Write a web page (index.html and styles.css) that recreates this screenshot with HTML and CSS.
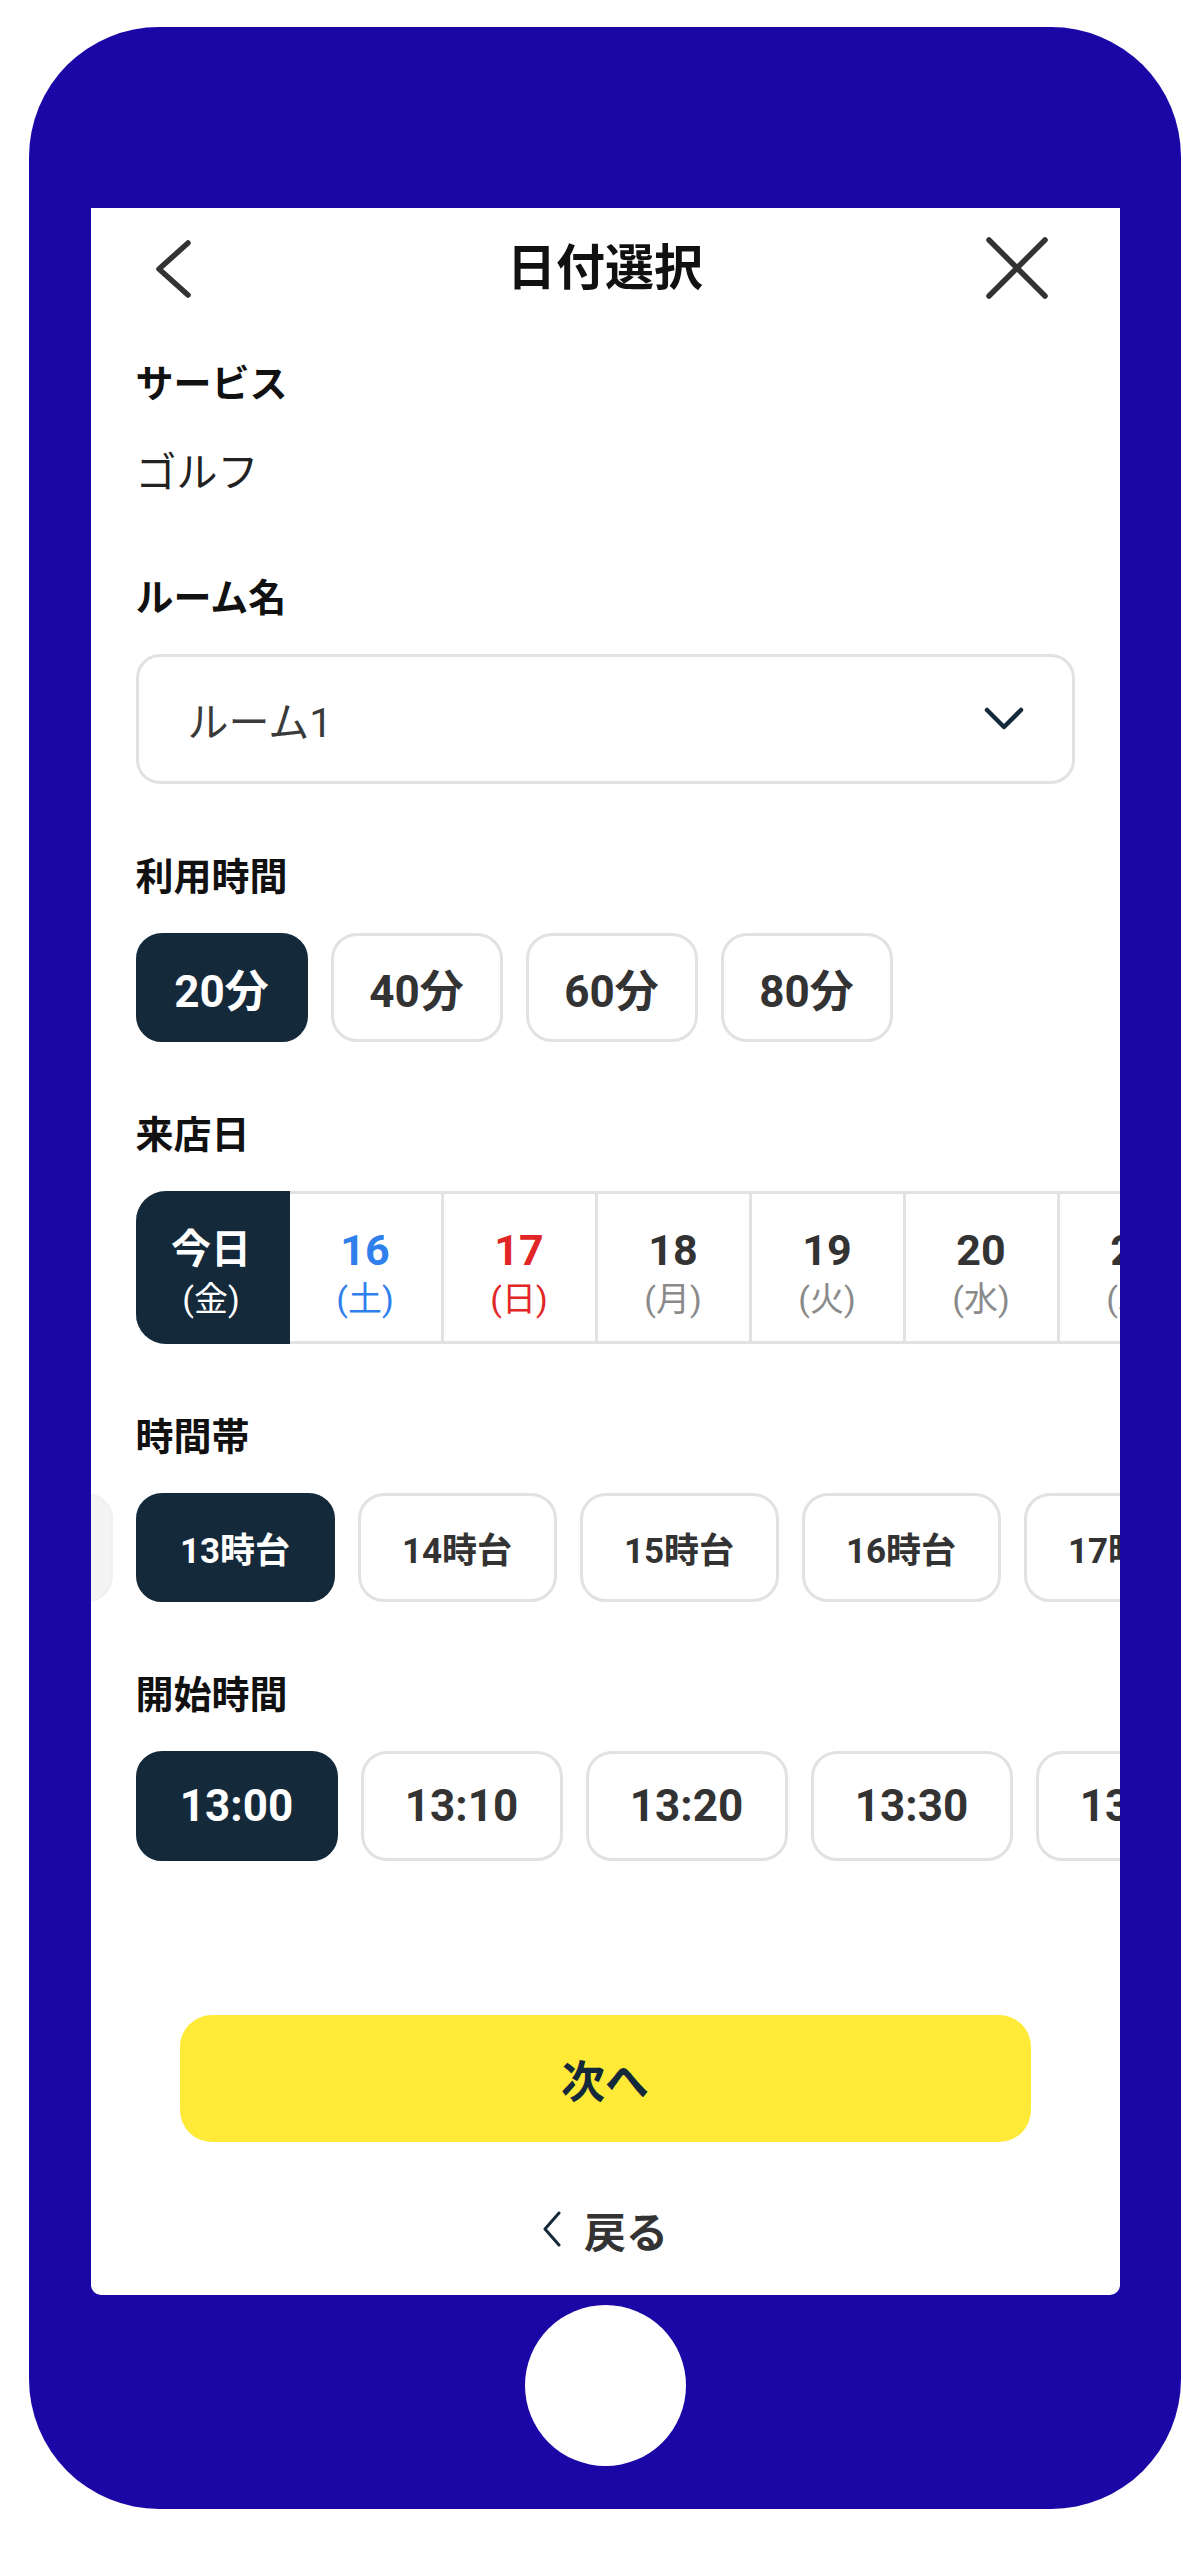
FILE: index.html
```html
<!DOCTYPE html>
<html lang="ja">
<head>
    <meta charset="UTF-8">
    <meta name="viewport" content="width=device-width, initial-scale=1.0">
    <title>日付選択</title>
    <link rel="stylesheet" href="styles.css">
</head>
<body>
    <div class="phone">
        <div class="screen">
            <header class="topbar">
                <button class="icon-btn back-btn" aria-label="戻る">
                    <svg viewBox="0 0 64 64" width="64" height="64"><path d="M47 7 L18 33 L47 59" /></svg>
                </button>
                <h1 class="title">日付選択</h1>
                <button class="icon-btn close-btn" aria-label="閉じる">
                    <svg viewBox="0 0 64 64" width="64" height="64"><path d="M4 4 L60 60 M60 4 L4 60" /></svg>
                </button>
            </header>

            <main class="form">
                <section class="field field-first">
                    <h2 class="field-label">サービス</h2>
                    <p class="field-value">ゴルフ</p>
                </section>

                <section class="field">
                    <h2 class="field-label">ルーム名</h2>
                    <div class="select">
                        <span>ルーム1</span>
                        <svg viewBox="0 0 40 24" width="40" height="24"><path d="M3 3 L20 20 L37 3" /></svg>
                    </div>
                </section>

                <section class="field">
                    <h2 class="field-label">利用時間</h2>
                    <div class="chip-row">
                        <button class="chip chip-duration active">20分</button>
                        <button class="chip chip-duration">40分</button>
                        <button class="chip chip-duration">60分</button>
                        <button class="chip chip-duration">80分</button>
                    </div>
                </section>

                <section class="field">
                    <h2 class="field-label">来店日</h2>
                    <div class="scroll-row date-row">
                        <div class="date-cell active"><span class="date-num today">今日</span><span class="date-week">(金)</span></div>
                        <div class="date-cell sat"><span class="date-num">16</span><span class="date-week">(土)</span></div>
                        <div class="date-cell sun"><span class="date-num">17</span><span class="date-week">(日)</span></div>
                        <div class="date-cell"><span class="date-num">18</span><span class="date-week">(月)</span></div>
                        <div class="date-cell"><span class="date-num">19</span><span class="date-week">(火)</span></div>
                        <div class="date-cell"><span class="date-num">20</span><span class="date-week">(水)</span></div>
                        <div class="date-cell"><span class="date-num">21</span><span class="date-week">(木)</span></div>
                        <div class="date-cell"><span class="date-num">22</span><span class="date-week">(金)</span></div>
                    </div>
                </section>

                <section class="field">
                    <h2 class="field-label">時間帯</h2>
                    <div class="scroll-row chip-row">
                        <button class="chip chip-band disabled scrolled-out">12時台</button>
                        <button class="chip chip-band active">13時台</button>
                        <button class="chip chip-band">14時台</button>
                        <button class="chip chip-band">15時台</button>
                        <button class="chip chip-band">16時台</button>
                        <button class="chip chip-band">17時台</button>
                        <button class="chip chip-band">18時台</button>
                    </div>
                </section>

                <section class="field">
                    <h2 class="field-label">開始時間</h2>
                    <div class="scroll-row chip-row">
                        <button class="chip chip-time active">13:00</button>
                        <button class="chip chip-time">13:10</button>
                        <button class="chip chip-time">13:20</button>
                        <button class="chip chip-time">13:30</button>
                        <button class="chip chip-time">13:40</button>
                        <button class="chip chip-time">13:50</button>
                    </div>
                </section>
            </main>

            <footer class="actions">
                <button class="btn-next">次へ</button>
                <a class="link-back" href="#">
                    <svg viewBox="0 0 20 36" width="20" height="36"><path d="M17 2 L3 18 L17 34" /></svg>
                    <span>戻る</span>
                </a>
            </footer>
        </div>
        <div class="home-btn"></div>
    </div>
</body>
</html>
```

FILE: styles.css
```css
* {
    box-sizing: border-box;
}
body {
    margin: 0;
    background: #fff;
    font-family: Roboto, "Noto Sans CJK JP", sans-serif;
    color: #333;
}
button {
    font-family: inherit;
    cursor: pointer;
}

/* device frame */
.phone {
    width: 1152px;
    height: 2482px;
    margin: 27px 0 0 29px;
    padding: 181px 61px 43px 61px;
    background: #1b06a6;
    border-radius: 130px;
    display: flex;
    flex-direction: column;
    align-items: center;
}
.screen {
    width: 1029px;
    height: 2087px;
    background: #fff;
    border-radius: 0 0 10px 10px;
    display: flex;
    flex-direction: column;
    overflow: hidden;
}
.home-btn {
    width: 161px;
    height: 161px;
    margin-top: 10px;
    border-radius: 50%;
    background: #fff;
}

/* header */
.topbar {
    height: 120px;
    display: grid;
    grid-template-columns: 1fr auto 1fr;
    align-items: center;
}
.icon-btn {
    width: 64px;
    height: 64px;
    padding: 0;
    border: none;
    background: none;
}
.icon-btn svg path {
    fill: none;
    stroke: #333;
    stroke-width: 5.5;
    stroke-linecap: round;
    stroke-linejoin: round;
}
.back-btn {
    justify-self: start;
    margin-left: 50px;
}
.close-btn {
    justify-self: end;
    margin-right: 71px;
}
.title {
    margin: 0;
    font-size: 49px;
    font-weight: 700;
    line-height: 1;
    color: #111;
}

/* form */
.form {
    padding: 28px 45px 0 45px;
}
.field {
    margin-top: 65px;
}
.field-first {
    margin-top: 0;
}
.field-label {
    margin: 0 0 27px 0;
    font-size: 38px;
    font-weight: 700;
    line-height: 57px;
    color: #111;
}
.field-first .field-label {
    margin-bottom: 28px;
}
.field-value {
    margin: 0;
    font-size: 41px;
    line-height: 64px;
    color: #222;
}

.select {
    height: 130px;
    padding: 0 48px 0 49px;
    border: 3px solid #e2e2e2;
    border-radius: 24px;
    display: flex;
    align-items: center;
    justify-content: space-between;
    font-size: 41px;
    color: #3a3a3a;
}
.select svg path {
    fill: none;
    stroke: #14293a;
    stroke-width: 4.5;
    stroke-linecap: round;
    stroke-linejoin: round;
}

/* chips */
.chip-row {
    display: flex;
    gap: 23px;
}
.scroll-row {
    margin: 0 -45px;
    padding: 0 45px;
    overflow: hidden;
}
.chip {
    flex-shrink: 0;
    height: 109px;
    padding: 0;
    border: 3px solid #e2e2e2;
    border-radius: 26px;
    background: #fff;
    color: #333;
    font-weight: 700;
    display: flex;
    align-items: center;
    justify-content: center;
}
.chip.active {
    background: #14293a;
    border-color: #14293a;
    color: #fff;
}
.chip.disabled {
    background: #f4f4f5;
    border-color: #f1f1f2;
    color: #bbb;
}
.chip-duration {
    width: 172px;
    font-size: 44px;
}
.chip-band {
    width: 199px;
    font-size: 35px;
}
.scrolled-out {
    margin-left: -222px;
}
.chip-time {
    width: 202px;
    height: 110px;
    font-size: 44px;
}

/* dates */
.date-row {
    display: flex;
}
.date-cell {
    flex-shrink: 0;
    width: 154px;
    height: 153px;
    padding-top: 11px;
    border-top: 3px solid #e2e2e2;
    border-bottom: 3px solid #e2e2e2;
    border-right: 3px solid #e2e2e2;
    display: flex;
    flex-direction: column;
    align-items: center;
    justify-content: center;
    color: #333;
}
.date-cell.active {
    background: #14293a;
    border-color: #14293a;
    border-radius: 30px 0 0 30px;
    color: #fff;
}
.date-num {
    font-size: 43px;
    font-weight: 700;
    line-height: 48px;
}
.date-num.today {
    font-size: 40px;
}
.date-week {
    margin-top: 3px;
    font-size: 34px;
    line-height: 44px;
    color: #8a8a8a;
}
.date-cell.active .date-week {
    color: #fff;
}
.date-cell.sat .date-num,
.date-cell.sat .date-week {
    color: #2f7fec;
}
.date-cell.sun .date-num,
.date-cell.sun .date-week {
    color: #e02626;
}

/* footer */
.actions {
    margin-top: auto;
    padding: 0 89px 36px 89px;
    display: flex;
    flex-direction: column;
    align-items: center;
}
.btn-next {
    width: 100%;
    height: 127px;
    border: none;
    border-radius: 32px;
    background: #ffea38;
    color: #14293a;
    font-size: 44px;
    font-weight: 700;
}
.link-back {
    margin-top: 57px;
    height: 60px;
    display: flex;
    align-items: center;
    gap: 22px;
    text-decoration: none;
    color: #333;
    font-size: 42px;
    font-weight: 700;
}
.link-back svg path {
    fill: none;
    stroke: #14293a;
    stroke-width: 3;
    stroke-linecap: round;
    stroke-linejoin: round;
}
```
